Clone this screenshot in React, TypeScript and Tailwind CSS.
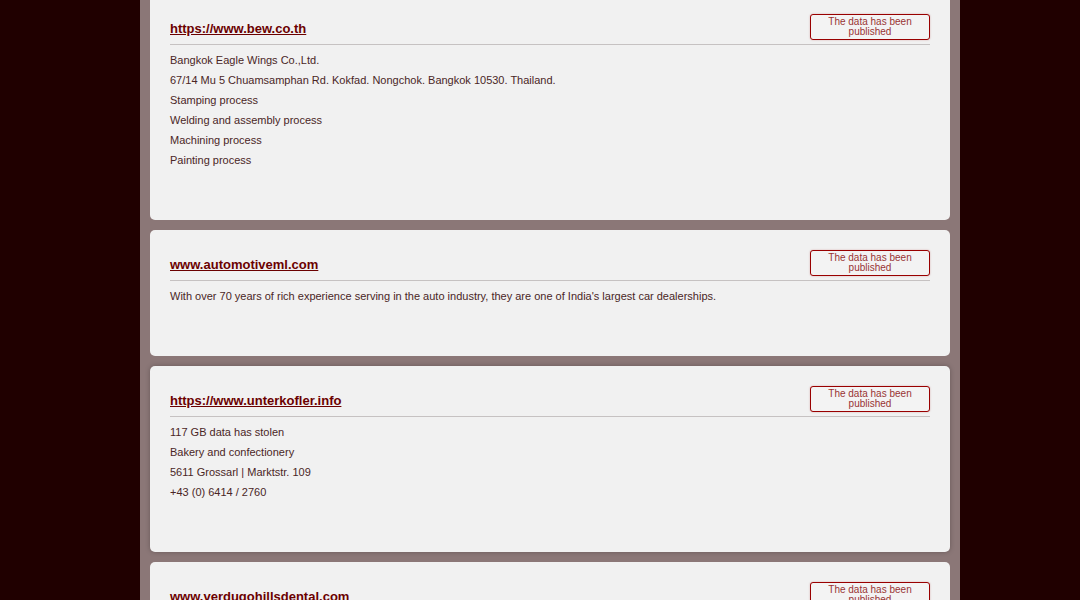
const entries = [
  {
    url: 'https://www.bew.co.th',
    lines: [
      'Bangkok Eagle Wings Co.,Ltd.',
      '67/14 Mu 5 Chuamsamphan Rd. Kokfad. Nongchok. Bangkok 10530. Thailand.',
      'Stamping process',
      'Welding and assembly process',
      'Machining process',
      'Painting process',
    ],
  },
  {
    url: 'www.automotiveml.com',
    lines: [
      "With over 70 years of rich experience serving in the auto industry, they are one of India's largest car dealerships.",
    ],
  },
  {
    url: 'https://www.unterkofler.info',
    lines: ['117 GB data has stolen', 'Bakery and confectionery', '5611 Grossarl | Marktstr. 109', '+43 (0) 6414 / 2760'],
    hover: true,
  },
  {
    url: 'www.verdugohillsdental.com',
    lines: ['Dental clinic'],
  },
]

function Card({ url, lines, hover }: { url: string; lines: string[]; hover?: boolean }) {
  return (
    <div
      className={
        'bg-[#f1f1f1] rounded-[5px] px-5 pt-5 pb-[50px] mb-[10px] ' +
        (hover ? 'shadow-[0_0_5px_rgba(0,0,0,0.25)]' : '')
      }
    >
      {/* header */}
      <div className="flex justify-between items-end pb-1 border-b border-[#c6c2c2]">
        <a href="#" className="text-[13px] leading-[15px] font-bold underline text-[#6b0000] mb-[4px]">
          {url}
        </a>
        <div className="w-[120px] h-[26px] flex flex-col justify-center items-center border border-[#990000] rounded-[3px] bg-[#f3f3f3] shadow-[0_0_2px_rgba(153,0,0,0.3)] text-[10px] leading-[10px] text-[#993333]">
          <span>The data has been</span>
          <span>published</span>
        </div>
      </div>
      <div className="mt-[5px]">
        {lines.map((l, i) => (
          <p key={i} className="text-[11px] leading-[20px] text-[#4a2626]">
            {l}
          </p>
        ))}
      </div>
    </div>
  )
}

export default function App() {
  return (
    <div className="min-h-screen bg-[#200000] flex justify-center pl-5 overflow-hidden" style={{ fontFamily: '"Liberation Sans", Arial, sans-serif' }}>
      <div className="w-[820px] bg-[#8b7777] px-[10px] min-h-screen">
        <div className="-mt-[6px]">
          {entries.map((e) => (
            <Card key={e.url} {...e} />
          ))}
        </div>
      </div>
    </div>
  )
}
